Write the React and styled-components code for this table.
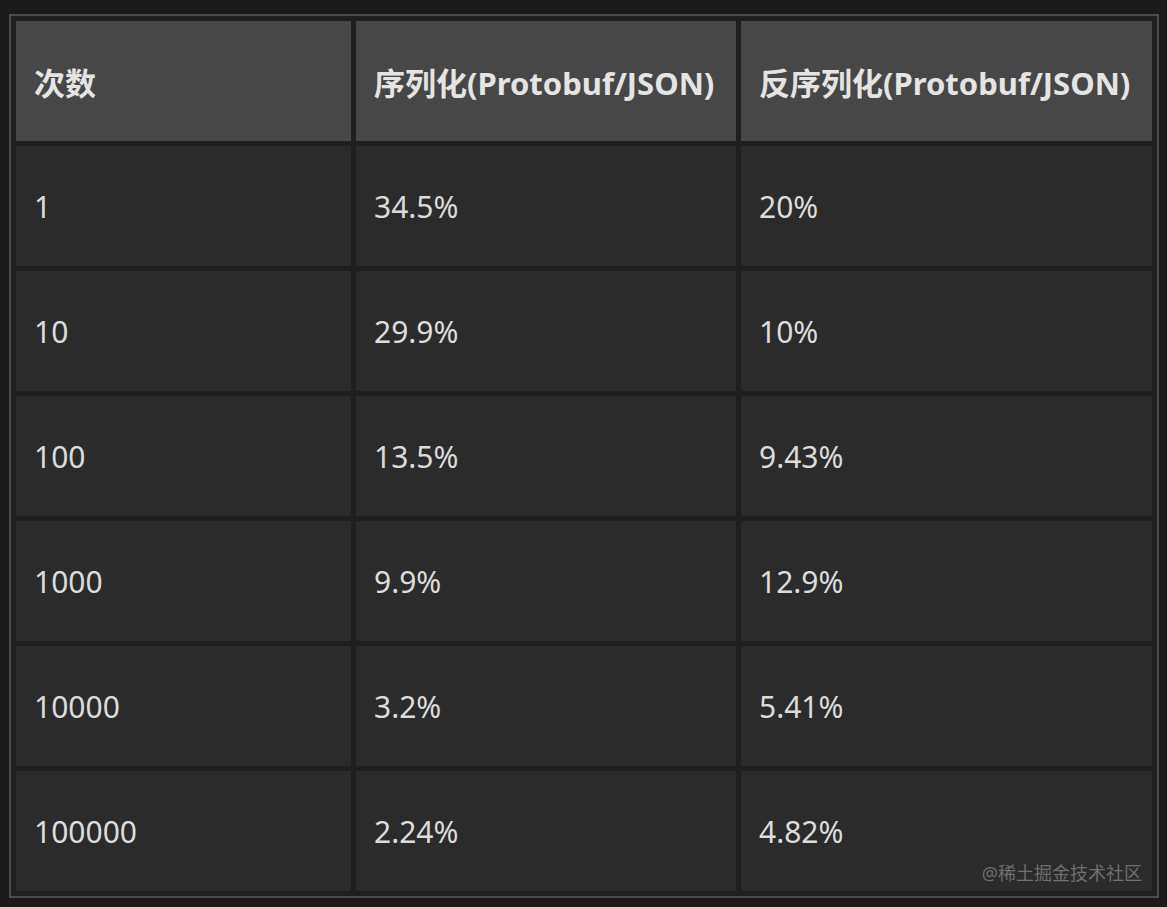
import React from 'react';
import styled, { createGlobalStyle } from 'styled-components';

const GlobalStyle = createGlobalStyle`
  html, body {
    margin: 0;
    padding: 0;
    background-color: #1b1b1b;
  }
`;

const Page = styled.div`
  width: 1167px;
  height: 907px;
  box-sizing: border-box;
  padding: 14px 8px 9px 9px;
  background-color: #1b1b1b;
  font-family: "Noto Sans", "Noto Sans CJK SC", sans-serif;
`;

const Frame = styled.div`
  position: relative;
  width: 1150px;
`;

const Table = styled.table`
  width: 1150px;
  table-layout: fixed;
  border-collapse: separate;
  border-spacing: 5px;
  border: 2px solid #4a4a4a;
  background-color: #1f1f1f;
`;

const HeadCell = styled.th`
  height: 120px;
  padding: 0 0 0 18px;
  box-sizing: border-box;
  background-color: #474747;
  color: #e4e4e4;
  font-size: 31px;
  font-weight: 700;
  text-align: left;
  vertical-align: middle;
  white-space: nowrap;
`;

const Cell = styled.td`
  height: 120px;
  padding: 0 0 0 18px;
  box-sizing: border-box;
  background-color: #2b2b2b;
  color: #dcdcdc;
  font-size: 30px;
  vertical-align: middle;
`;

const Watermark = styled.span`
  position: absolute;
  right: 17px;
  bottom: 13px;
  font-size: 18px;
  color: #6f6f6f;
  font-family: "Noto Sans", "Noto Sans CJK SC", sans-serif;
`;

const columns = ['次数', '序列化(Protobuf/JSON)', '反序列化(Protobuf/JSON)'];
const widths = [335, 380, 411];

const rows = [
  ['1', '34.5%', '20%'],
  ['10', '29.9%', '10%'],
  ['100', '13.5%', '9.43%'],
  ['1000', '9.9%', '12.9%'],
  ['10000', '3.2%', '5.41%'],
  ['100000', '2.24%', '4.82%'],
];

const App = () => (
  <>
    <GlobalStyle />
    <Page>
      <Frame>
        <Table>
          <colgroup>
            {widths.map(w => <col key={w} style={{ width: w }} />)}
          </colgroup>
          <thead>
            <tr>
              {columns.map(c => <HeadCell key={c}>{c}</HeadCell>)}
            </tr>
          </thead>
          <tbody>
            {rows.map(r => (
              <tr key={r[0]}>
                {r.map((v, i) => <Cell key={i}>{v}</Cell>)}
              </tr>
            ))}
          </tbody>
        </Table>
        <Watermark>@稀土掘金技术社区</Watermark>
      </Frame>
    </Page>
  </>
);

export default App;
